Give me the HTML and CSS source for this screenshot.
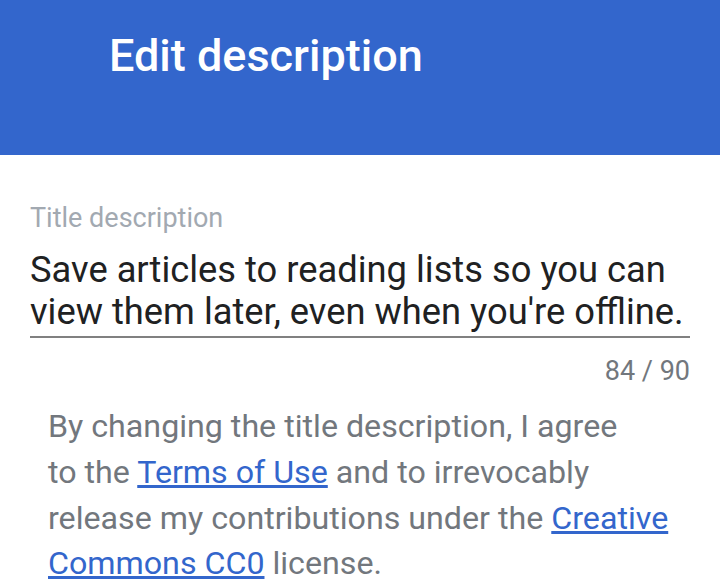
FILE: index.html
```html
<!DOCTYPE html>
<html>
<head>
<meta charset="utf-8">
<link rel="stylesheet" href="styles.css">
</head>
<body>
<header class="appbar">
  <h1 class="appbar-title">Edit description</h1>
</header>
<main class="content">
  <div class="field">
    <label class="field-label">Title description</label>
    <div class="field-input">Save articles to reading lists so you can view them later, even when you're offline.</div>
    <div class="field-counter">84 / 90</div>
  </div>
  <p class="license">By changing the title description, I agree<br>to the <a href="#">Terms of Use</a> and to irrevocably release my contributions under the <a href="#">Creative Commons CC0</a> license.</p>
</main>
</body>
</html>
```
FILE: styles.css
```css
html, body {
  margin: 0;
  padding: 0;
  background: #ffffff;
  font-family: Roboto, "Noto Sans", sans-serif;
}
.appbar {
  background: #3366cc;
  height: 155px;
  padding: 0 0 0 109px;
  box-sizing: border-box;
}
.appbar-title {
  margin: 0;
  padding-top: 30px;
  font-size: 45px;
  line-height: 52px;
  font-weight: 500;
  color: #ffffff;
}
.content {
  padding: 47px 30px 0 30px;
}
.field-label {
  display: block;
  font-size: 27px;
  line-height: 32px;
  color: #a2a9b1;
}
.field-input {
  margin-top: 15px;
  font-size: 36.3px;
  line-height: 42px;
  color: #202122;
  padding-bottom: 3px;
  border-bottom: 2px solid #808080;
}
.field-counter {
  text-align: right;
  font-size: 27px;
  line-height: 32px;
  color: #72777d;
  margin-top: 17px;
}
.license {
  margin: 17px 0 0 0;
  padding: 0 16px 0 18px;
  font-size: 32.2px;
  line-height: 45.8px;
  color: #72777d;
}
.license a {
  color: #3366cc;
  text-decoration: underline;
}
```
